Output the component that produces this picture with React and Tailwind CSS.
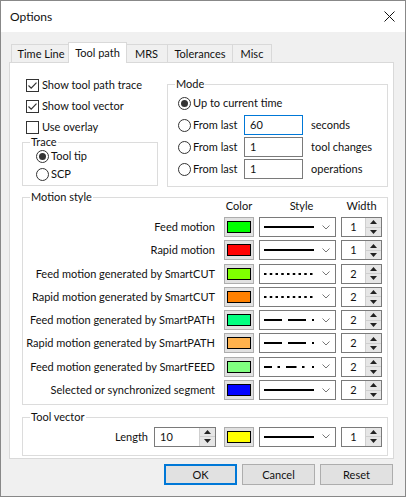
import React from "react";

const motionRows = [
  { label: "Feed motion", color: "#00ff00", style: "solid", width: 1 },
  { label: "Rapid motion", color: "#ff0000", style: "solid", width: 1 },
  { label: "Feed motion generated by SmartCUT", color: "#80ff00", style: "dotted", width: 2 },
  { label: "Rapid motion generated by SmartCUT", color: "#ff8000", style: "dotted", width: 2 },
  { label: "Feed motion generated by SmartPATH", color: "#00ff80", style: "dashDot", width: 2 },
  { label: "Rapid motion generated by SmartPATH", color: "#ffb24d", style: "dashDot", width: 2 },
  { label: "Feed motion generated by SmartFEED", color: "#80ff80", style: "dashDots", width: 2 },
  { label: "Selected or synchronized segment", color: "#0000ff", style: "solid", width: 2 },
];

const segments = {
  solid: [[0, 50]],
  dotted: [0, 1, 2, 3, 4, 5, 6, 7, 8].map((i) => [i * 5.75, i * 5.75 + 2.5]),
  dashDot: [[0, 18], [24, 42], [48, 50]],
  dashDots: [[0, 8], [13.5, 16], [22, 32.5], [38, 40.5], [48, 50.5]],
};

const CheckBox = ({ checked, label }) => (
  <div className="flex h-[20px] items-center gap-[3px] pl-[4px]">
    <svg width="13" height="13" viewBox="0 0 13 13" className="shrink-0">
      <rect x="0.5" y="0.5" width="12" height="12" fill="#fff" stroke="#333" />
      {checked && (
        <path d="M2.5 6.5 L5.2 9.2 L10.5 3.6" fill="none" stroke="#333" strokeWidth="1.2" />
      )}
    </svg>
    <span className="whitespace-nowrap">{label}</span>
  </div>
);

const Radio = ({ checked }) => (
  <svg width="13" height="13" viewBox="0 0 13 13" className="shrink-0">
    <circle cx="6.5" cy="6.5" r="6" fill="#fff" stroke="#333" />
    {checked && <circle cx="6.5" cy="6.5" r="3.5" fill="#333" />}
  </svg>
);

const GroupBox = ({ title, className, children }) => (
  <div className={`relative border border-[#dcdcdc] ${className}`}>
    <span className="absolute -top-[9px] left-[7px] whitespace-nowrap bg-white px-[1px] leading-[16px]">
      {title}
    </span>
    {children}
  </div>
);

const SpinArrows = () => (
  <div className="flex w-[16px] flex-col border-l border-[#cfcfcf] bg-[#e6e6e6]">
    <div className="flex flex-1 items-center justify-center border-b border-[#cfcfcf]">
      <svg width="7" height="4" viewBox="0 0 7 4">
        <path d="M0 4 L3.5 0 L7 4 Z" fill="#222" />
      </svg>
    </div>
    <div className="flex flex-1 items-center justify-center">
      <svg width="7" height="4" viewBox="0 0 7 4">
        <path d="M0 0 L3.5 4 L7 0 Z" fill="#222" />
      </svg>
    </div>
  </div>
);

const WidthSpinner = ({ value }) => (
  <div className="flex h-[20px] w-[41px] border border-[#7a7a7a] bg-white">
    <div className="flex flex-1 items-center justify-center">{value}</div>
    <SpinArrows />
  </div>
);

const ColorButton = ({ color }) => (
  <div className="flex h-[20px] w-[30px] items-center justify-center border border-[#adadad] bg-[#e1e1e1]">
    <div className="h-[12px] w-[24px] border border-black" style={{ backgroundColor: color }} />
  </div>
);

const StyleCombo = ({ kind }) => (
  <div className="flex h-[20px] w-[77px] items-center border border-[#7a7a7a] bg-white pl-[4px]">
    <svg width="50" height="2" viewBox="0 0 50 2">
      {segments[kind].map(([a, b], i) => (
        <rect key={i} x={a} y="0" width={b - a} height="2" fill="#000" />
      ))}
    </svg>
    <svg width="8" height="5" viewBox="0 0 8 5" className="ml-[8px]">
      <path d="M0.5 0.5 L4 4 L7.5 0.5" fill="none" stroke="#777" />
    </svg>
  </div>
);

const ModeRow = ({ checked, label, value, unit, focused }) => (
  <div className="flex h-[20px] items-center">
    <div className="flex w-[66px] shrink-0 items-center gap-[2px]">
      <Radio checked={checked} />
      <span className="whitespace-nowrap">{label}</span>
    </div>
    {value !== undefined && (
      <>
        <div
          className={`flex h-[20px] w-[59px] items-center border bg-white pl-[5px] ${
            focused ? "border-[#0078d7]" : "border-[#7a7a7a]"
          }`}
        >
          {value}
        </div>
        <span className="ml-[8px] whitespace-nowrap">{unit}</span>
      </>
    )}
  </div>
);

const tabs = ["Time Line", "Tool path", "MRS", "Tolerances", "Misc"];
const tabWidths = ["w-[59px]", "w-[59px]", "w-[42px]", "w-[65px]", "w-[40px]"];

export default function App() {
  return (
    <div className="flex h-[497px] w-[406px] flex-col border border-[#888] bg-[#f0f0f0] font-['Lato','Noto_Sans',sans-serif] text-[11px] leading-[16px] text-[#111]">
      <div className="flex h-[31px] shrink-0 items-center justify-between bg-white pl-[9px] pr-[9px]">
        <span className="text-[12px]">Options</span>
        <svg width="11" height="11" viewBox="0 0 11 11" className="mr-[1px]">
          <path d="M0.5 0.5 L10.5 10.5 M10.5 0.5 L0.5 10.5" stroke="#111" strokeWidth="1" />
        </svg>
      </div>

      <div className="flex flex-col pl-[8px] pr-[11px]">
        <div className="mt-[10px] flex h-[20px] items-end pl-[2px]">
          {tabs.map((t, i) =>
            i === 1 ? (
              <div
                key={t}
                className={`relative z-10 -mx-[2px] -mb-px flex h-[21px] ${tabWidths[i]} items-start justify-center whitespace-nowrap border-x border-t border-[#d9d9d9] bg-white pt-[2px]`}
              >
                {t}
              </div>
            ) : (
              <div
                key={t}
                className={`flex h-[18px] ${tabWidths[i]} items-center justify-center whitespace-nowrap border-l border-t border-[#d9d9d9] bg-[#f0f0f0] ${
                  i === 4 ? "border-r" : ""
                }`}
              >
                {t}
              </div>
            )
          )}
        </div>

        <div className="flex h-[397px] flex-col border border-[#d9d9d9] bg-white pl-[12px] pr-[5px] pt-[12px]">
          <div className="flex gap-[9px]">
            <div className="flex w-[136px] shrink-0 flex-col">
              <div className="flex flex-col gap-[1px]">
                <CheckBox checked label="Show tool path trace" />
                <CheckBox checked label="Show tool vector" />
                <CheckBox label="Use overlay" />
              </div>
              <GroupBox title="Trace" className="mt-[5px] h-[44px] pl-[13px] pt-[4px]">
                <div className="flex h-[18px] items-center gap-[2px]">
                  <Radio checked />
                  <span>Tool tip</span>
                </div>
                <div className="flex h-[18px] items-center gap-[2px]">
                  <Radio />
                  <span>SCP</span>
                </div>
              </GroupBox>
            </div>

            <GroupBox title="Mode" className="mt-[9px] flex h-[103px] flex-1 flex-col gap-[2px] pl-[10px] pt-[8px]">
              <ModeRow checked label="Up to current time" />
              <ModeRow label="From last" value="60" unit="seconds" focused />
              <ModeRow label="From last" value="1" unit="tool changes" />
              <ModeRow label="From last" value="1" unit="operations" />
            </GroupBox>
          </div>

          <GroupBox title="Motion style" className="mt-[10px] flex h-[208px] flex-col pr-[5px] pt-[1px]">
            <div className="flex h-[14px] items-center justify-end">
              <span className="w-[30px] text-center">Color</span>
              <span className="ml-[5px] w-[77px] pl-[8px] text-center">Style</span>
              <span className="ml-[5px] w-[41px] text-center">Width</span>
            </div>
            <div className="mt-[4px] flex flex-col gap-[3.3px]">
              {motionRows.map((r) => (
                <div key={r.label} className="flex h-[20px] items-center justify-end">
                  <span className="mr-[9px] whitespace-nowrap text-right">{r.label}</span>
                  <ColorButton color={r.color} />
                  <div className="ml-[5px]">
                    <StyleCombo kind={r.style} />
                  </div>
                  <div className="ml-[5px]">
                    <WidthSpinner value={r.width} />
                  </div>
                </div>
              ))}
            </div>
          </GroupBox>

          <GroupBox title="Tool vector" className="mt-[12px] flex h-[39px] items-center justify-end pr-[5px]">
            <span className="mr-[6px]">Length</span>
            <div className="flex h-[20px] w-[62px] border border-[#7a7a7a] bg-white">
              <div className="flex flex-1 items-center pl-[5px]">10</div>
              <SpinArrows />
            </div>
            <div className="ml-[8px]">
              <ColorButton color="#ffff00" />
            </div>
            <div className="ml-[5px]">
              <StyleCombo kind="solid" />
            </div>
            <div className="ml-[5px]">
              <WidthSpinner value={1} />
            </div>
          </GroupBox>
        </div>

        <div className="mt-[5px] flex justify-end gap-[5px] pr-[1px]">
          <button className="flex h-[21px] w-[73px] items-center justify-center border-2 border-[#0078d7] bg-[#e1e1e1]">
            OK
          </button>
          <button className="flex h-[21px] w-[73px] items-center justify-center border border-[#adadad] bg-[#e1e1e1]">
            Cancel
          </button>
          <button className="flex h-[21px] w-[73px] items-center justify-center border border-[#adadad] bg-[#e1e1e1]">
            Reset
          </button>
        </div>
      </div>
    </div>
  );
}
